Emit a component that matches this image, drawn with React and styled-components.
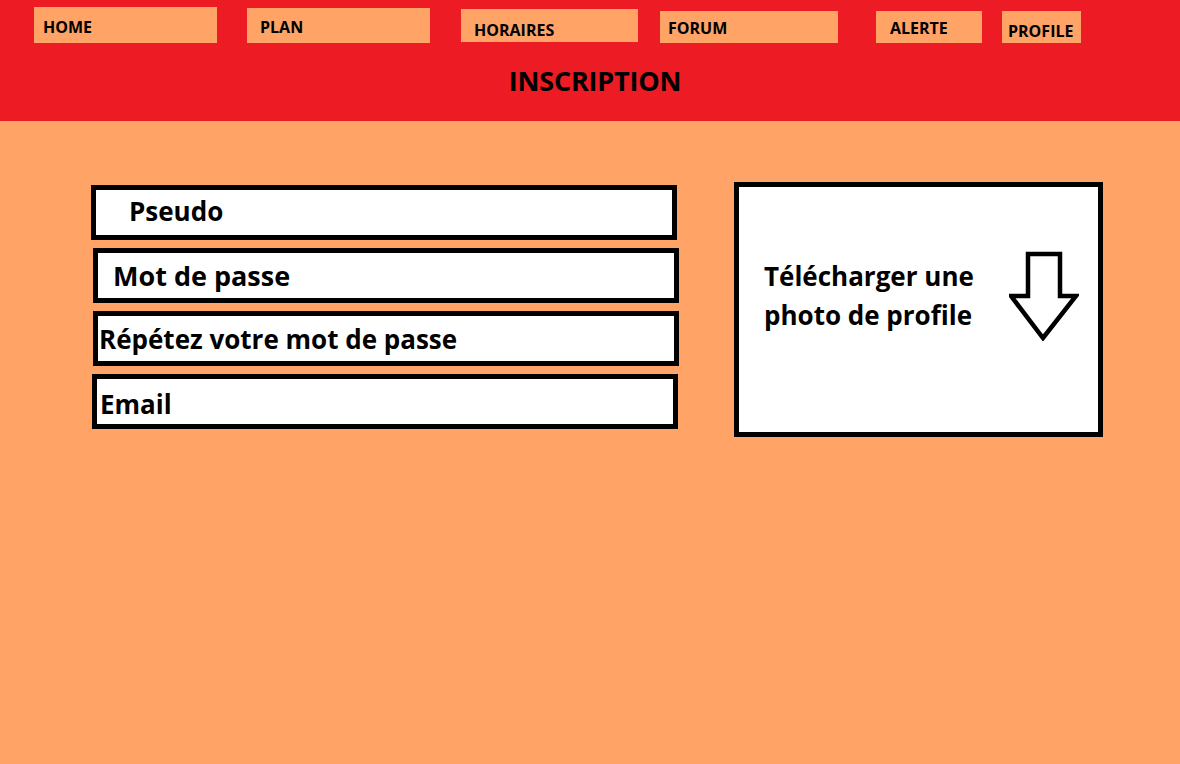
import React from 'react'
import styled, { createGlobalStyle } from 'styled-components'

const GlobalStyle = createGlobalStyle`
  html, body {
    margin: 0;
    padding: 0;
    background: #ffa366;
  }
  body {
    font-family: "Open Sans", "Noto Sans", sans-serif;
    color: #000;
  }
`

const Page = styled.div`
  width: 1180px;
  min-height: 764px;
  background: #ffa366;
`

const Header = styled.header`
  height: 121px;
  background: #ed1c24;
  display: flex;
  flex-direction: column;
`

const NavBar = styled.nav`
  display: flex;
  align-items: flex-start;
  padding-left: 34px;
`

const NavItem = styled.a`
  box-sizing: border-box;
  display: block;
  width: ${(p) => p.$w}px;
  height: ${(p) => p.$h}px;
  margin-left: ${(p) => p.$gap}px;
  margin-top: ${(p) => p.$top}px;
  padding: ${(p) => p.$py}px 0 0 ${(p) => p.$px}px;
  background: #ffa366;
  color: #000;
  font-size: 16px;
  font-weight: 700;
  line-height: 16px;
  text-decoration: none;
  cursor: pointer;
`

const Title = styled.h1`
  margin: 19px 0 0;
  padding-left: 10px;
  text-align: center;
  font-size: 27px;
  font-weight: 700;
  line-height: 37px;
  letter-spacing: -0.2px;
`

const Main = styled.main`
  display: flex;
  align-items: flex-start;
  padding: 61px 0 0 91px;
`

const Form = styled.div`
  display: flex;
  flex-direction: column;
  gap: 8px;
  width: 588px;
  margin-top: 3px;
`

const Field = styled.div`
  box-sizing: border-box;
  display: flex;
  align-items: center;
  width: 586px;
  height: 55px;
  margin-left: ${(p) => p.$shift || 0}px;
  padding-left: ${(p) => p.$indent}px;
  padding-top: ${(p) => (p.$dy > 0 ? p.$dy * 2 : 0)}px;
  padding-bottom: ${(p) => (p.$dy < 0 ? -p.$dy * 2 : 0)}px;
  background: #fff;
  border: 5px solid #000;
  font-size: ${(p) => p.$size || 26}px;
  font-weight: 700;
  white-space: nowrap;
`

const Upload = styled.div`
  box-sizing: border-box;
  display: flex;
  align-items: flex-start;
  width: 369px;
  height: 255px;
  margin-left: 55px;
  padding: 70px 0 0 25px;
  background: #fff;
  border: 5px solid #000;
  cursor: pointer;
`

const UploadText = styled.p`
  margin: 0;
  width: 244px;
  font-size: 26px;
  font-weight: 700;
  line-height: 39px;
`

const Arrow = styled.svg`
  display: block;
  margin-top: -6px;
  margin-left: 1px;
  flex-shrink: 0;
`

const navLinks = [
  { label: 'HOME', w: 183, h: 36, gap: 0, top: 7, px: 9, py: 12 },
  { label: 'PLAN', w: 183, h: 35, gap: 30, top: 8, px: 13, py: 11 },
  { label: 'HORAIRES', w: 177, h: 33, gap: 31, top: 9, px: 13, py: 13 },
  { label: 'FORUM', w: 178, h: 32, gap: 22, top: 11, px: 8, py: 9 },
  { label: 'ALERTE', w: 106, h: 32, gap: 38, top: 11, px: 14, py: 9 },
  { label: 'PROFILE', w: 79, h: 32, gap: 20, top: 11, px: 6, py: 12 },
]

const fields = [
  { label: 'Pseudo', indent: 33, shift: 0, dy: -2 },
  { label: 'Mot de passe', indent: 15, shift: 2, dy: 0, size: 27 },
  { label: 'Répétez votre mot de passe', indent: 1, shift: 2, dy: 0 },
  { label: 'Email', indent: 3, shift: 1, dy: 2 },
]

export default function App() {
  return (
    <Page>
      <GlobalStyle />
      <Header>
        <NavBar>
          {navLinks.map((l) => (
            <NavItem key={l.label} $w={l.w} $h={l.h} $gap={l.gap} $top={l.top} $px={l.px} $py={l.py}>
              {l.label}
            </NavItem>
          ))}
        </NavBar>
        <Title>INSCRIPTION</Title>
      </Header>

      <Main>
        <Form>
          {fields.map((f) => (
            <Field key={f.label} $indent={f.indent} $shift={f.shift} $dy={f.dy} $size={f.size}>
              {f.label}
            </Field>
          ))}
        </Form>

        <Upload>
          <UploadText>
            Télécharger une
            <br />
            photo de profile
          </UploadText>
          <Arrow width="70" height="90" viewBox="0 0 70 90">
            <polygon
              points="19,3 51,3 51,45 67,45 34,87 2,45 19,45"
              fill="#fff"
              stroke="#000"
              strokeWidth="4.5"
              strokeLinejoin="miter"
            />
          </Arrow>
        </Upload>
      </Main>
    </Page>
  )
}
